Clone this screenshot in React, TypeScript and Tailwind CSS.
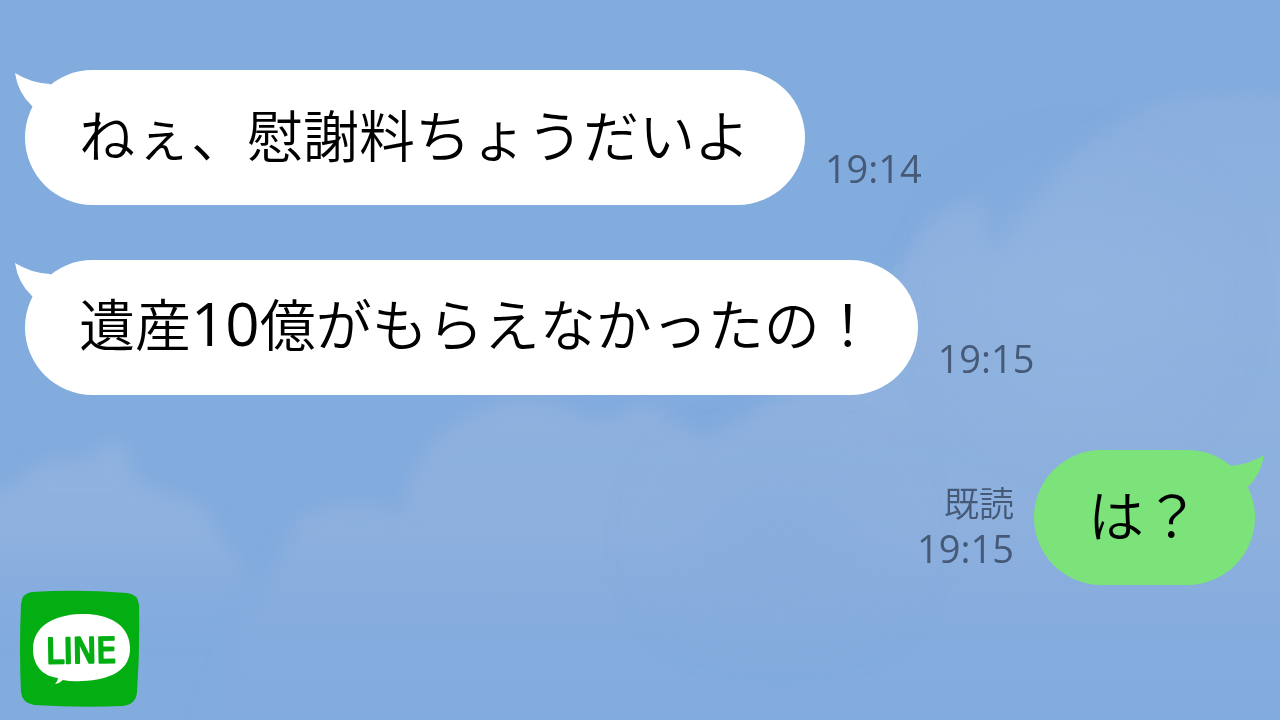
import React from 'react';
import clsx from 'clsx';

interface Message {
  id: number;
  text: string;
  time: string;
  mine?: boolean;
  read?: boolean;
  padding: string;
}

const messages: Message[] = [
  { id: 1, text: 'ねぇ、慰謝料ちょうだいよ', time: '19:14', padding: 'pl-[54px] pr-[55px]' },
  // Full-width "!" already carries its own space on the right
  { id: 2, text: '遺産10億がもらえなかったの！', time: '19:15', padding: 'pl-[54px] pr-[42px]' },
  { id: 3, text: 'は？', time: '19:15', mine: true, read: true, padding: 'pl-[54px] pr-[55px]' },
];

function Sky() {
  return (
    <svg
      className="absolute inset-0 h-full w-full"
      viewBox="0 0 1280 720"
      preserveAspectRatio="none"
      aria-hidden="true"
    >
      <defs>
        <filter id="soft" x="-20%" y="-20%" width="140%" height="140%">
          <feGaussianBlur stdDeviation="9" />
        </filter>
        <filter id="wide" x="-50%" y="-50%" width="200%" height="200%">
          <feGaussianBlur stdDeviation="40" />
        </filter>
        <linearGradient id="cloud" gradientUnits="userSpaceOnUse" x1="0" y1="440" x2="0" y2="640">
          <stop offset="0" stopColor="#8fb2df" />
          <stop offset="0.5" stopColor="#8fb2df" stopOpacity="0.9" />
          <stop offset="1" stopColor="#86acdd" stopOpacity="0" />
        </linearGradient>
        <linearGradient id="bank" gradientUnits="userSpaceOnUse" x1="0" y1="90" x2="0" y2="720">
          <stop offset="0" stopColor="#8fb2df" stopOpacity="0.6" />
          <stop offset="0.3" stopColor="#8fb2df" />
          <stop offset="0.7" stopColor="#8db0de" stopOpacity="0.95" />
          <stop offset="1" stopColor="#86acdd" stopOpacity="0.1" />
        </linearGradient>
      </defs>
      <rect width="1280" height="720" fill="#82abde" />
      <g filter="url(#soft)">
        <path
          fill="url(#cloud)"
          d="M-40 500 L0 490 Q20 485 35 465 Q60 455 90 460 Q100 440 118 442 Q132 450 133 475 Q160 495 195 500 Q215 520 225 545 Q245 560 250 590 L220 660 L-40 660Z"
        />
        <path
          fill="url(#bank)"
          d="M200 720 L255 600 Q280 560 300 515 Q325 505 370 500 Q385 515 402 508 Q410 470 430 445 Q460 410 520 398 Q560 400 590 420 Q620 420 640 402 Q680 420 705 440 Q780 400 850 340 Q900 270 925 225 Q955 200 980 202 Q990 225 992 258 Q1005 235 1035 205 Q1065 155 1120 122 Q1160 95 1220 95 Q1260 90 1330 100 L1330 760 L200 760Z"
        />
      </g>
      <g filter="url(#wide)">
        <ellipse cx="1080" cy="300" rx="110" ry="110" fill="#94b6e2" opacity="0.4" />
        <ellipse cx="780" cy="540" rx="90" ry="60" fill="#86acdd" opacity="0.7" />
      </g>
    </svg>
  );
}

function Tail({ mine }: { mine?: boolean }) {
  return (
    <svg
      viewBox="0 0 45 40"
      className={clsx(
        'absolute h-10 w-[45px]',
        mine ? 'top-[5px] right-[-9px] -scale-x-100 text-[#7be379]' : 'top-[3px] left-[-10px] text-white'
      )}
      aria-hidden="true"
    >
      <path fill="currentColor" d="M0 0 Q16 10 35 11 L45 20 L25 40 L17 33 Q3 20 0 0Z" />
    </svg>
  );
}

// Latin digits are set a little larger so they stand as tall as the kanji
function MessageText({ text }: { text: string }) {
  return (
    <span className="relative">
      {text.split(/(\d+)/).map((part, i) =>
        /^\d+$/.test(part) ? (
          <span key={i} className="font-['Open_Sans'] text-[60px] leading-none font-normal">
            {part}
          </span>
        ) : (
          part
        )
      )}
    </span>
  );
}

function ChatRow({ message }: { message: Message }) {
  const { text, time, mine, read, padding } = message;

  return (
    <li className={clsx('flex items-end gap-5', mine && 'flex-row-reverse')}>
      <p
        className={clsx(
          'relative flex h-[135px] items-center rounded-full pb-2.5 text-[56px] leading-none font-[350] whitespace-nowrap text-black',
          padding,
          mine ? 'bg-[#7be379]' : 'bg-white'
        )}
      >
        <Tail mine={mine} />
        <MessageText text={text} />
      </p>
      <div className="flex flex-col items-end pb-4 text-[#465a78]">
        {read && <span className="text-[35px] leading-[50px] font-[350]">既読</span>}
        <time className="font-['Open_Sans'] text-[38px] leading-[42px] font-medium">{time}</time>
      </div>
    </li>
  );
}

function LineLogo() {
  return (
    <svg viewBox="0 0 120 118" className="h-[118px] w-[120px]" role="img" aria-label="LINE">
      <path
        fill="#03ae12"
        d="M12 2 Q58 -1 107 3 Q118 4 119 15 Q120 60 117 102 Q116 115 102 116 Q60 118 14 115 Q2 113 1 102 Q-1 60 1 14 Q2 3 12 2Z"
      />
      <path
        fill="#fff"
        d="M60 24 C86 23 109 33 110 57 C111 80 91 90 62 91 Q52 92 43 90 Q40 93 35 94 Q38 91 38 88 C22 86 13 75 13 59 C13 36 34 25 60 24Z"
      />
      <text
        x="26"
        y="73"
        fill="#03ae12"
        stroke="#03ae12"
        strokeWidth="2"
        strokeLinejoin="round"
        fontFamily="DejaVu Sans Condensed, sans-serif"
        fontSize="35"
        transform="rotate(-1 60 60)"
      >
        LINE
      </text>
    </svg>
  );
}

export default function App() {
  return (
    <main
      lang="ja"
      className="relative flex min-h-screen flex-col overflow-hidden bg-[#82abde] font-['Noto_Sans_CJK_JP',sans-serif]"
    >
      <Sky />
      <ul className="relative flex flex-col gap-[55px] px-[25px] pt-[70px]">
        {messages.map((message) => (
          <ChatRow key={message.id} message={message} />
        ))}
      </ul>
      <footer className="relative mt-auto px-5 pb-3">
        <LineLogo />
      </footer>
    </main>
  );
}
